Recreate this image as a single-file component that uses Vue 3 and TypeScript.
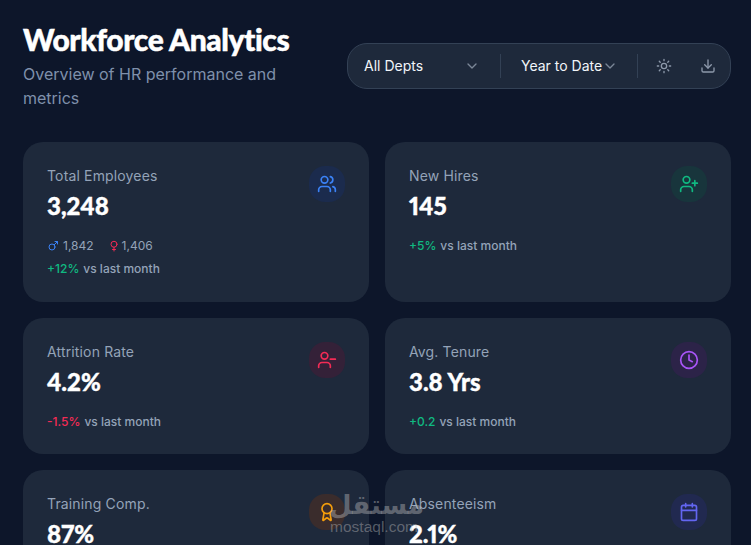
<script setup lang="ts">
interface Card {
  label: string;
  value: string;
  trend: string;
  trendClass: string;
  tone: string;
  icon: string;
  gender?: boolean;
}
const cards: Card[] = [
  { label: 'Total Employees', value: '3,248', trend: '+12%', trendClass: 'up', tone: 'blue', icon: 'users', gender: true },
  { label: 'New Hires', value: '145', trend: '+5%', trendClass: 'up', tone: 'green', icon: 'plus' },
  { label: 'Attrition Rate', value: '4.2%', trend: '-1.5%', trendClass: 'down', tone: 'red', icon: 'minus' },
  { label: 'Avg. Tenure', value: '3.8 Yrs', trend: '+0.2', trendClass: 'up', tone: 'purple', icon: 'clock' },
  { label: 'Training Comp.', value: '87%', trend: '+3%', trendClass: 'up', tone: 'amber', icon: 'award' },
  { label: 'Absenteeism', value: '2.1%', trend: '-0.4%', trendClass: 'up', tone: 'indigo', icon: 'calendar' },
];
</script>

<template>
  <div class="page">
    <header class="header">
      <div class="heading">
        <h1 class="title">Workforce Analytics</h1>
        <p class="subtitle">Overview of HR performance and metrics</p>
      </div>
      <div class="toolbar">
        <div class="select first">
          <span>All Depts</span>
          <svg class="chev" viewBox="0 0 24 24"><path d="m6 9 6 6 6-6" /></svg>
        </div>
        <i class="rule"></i>
        <div class="select second">
          <span>Year to Date</span>
          <svg class="chev" viewBox="0 0 24 24"><path d="m6 9 6 6 6-6" /></svg>
        </div>
        <i class="rule"></i>
        <svg class="tool sun" viewBox="0 0 24 24">
          <circle cx="12" cy="12" r="4" />
          <path d="M12 2v2M12 20v2M4.93 4.93l1.41 1.41M17.66 17.66l1.41 1.41M2 12h2M20 12h2M6.34 17.66l-1.41 1.41M19.07 4.93l-1.41 1.41" />
        </svg>
        <svg class="tool down-icon" viewBox="0 0 24 24">
          <path d="M21 15v4a2 2 0 0 1-2 2H5a2 2 0 0 1-2-2v-4" />
          <path d="m7 10 5 5 5-5" />
          <path d="M12 15V3" />
        </svg>
      </div>
    </header>

    <main class="grid">
      <section v-for="card in cards" :key="card.label" class="card">
        <div class="body">
          <div class="label">{{ card.label }}</div>
          <div class="value">{{ card.value }}</div>
          <div v-if="card.gender" class="gender">
            <span class="g">
              <svg class="gi male" viewBox="0 0 24 24"><circle cx="10" cy="14" r="6" /><path d="M14.5 9.5 21 3M16 3h5v5" /></svg>
              1,842
            </span>
            <span class="g g-f">
              <svg class="gi female" viewBox="0 0 24 24"><circle cx="12" cy="8.5" r="6" /><path d="M12 14.5V22M9 19h6" /></svg>
              1,406
            </span>
          </div>
          <div class="trend" :class="{ tight: card.gender }">
            <span :class="card.trendClass">{{ card.trend }}</span>
            <span class="vs">vs last month</span>
          </div>
        </div>
        <div class="badge" :class="card.tone">
          <svg viewBox="0 0 24 24">
            <template v-if="card.icon === 'users'">
              <path d="M16 21v-2a4 4 0 0 0-4-4H6a4 4 0 0 0-4 4v2" />
              <circle cx="9" cy="7" r="4" />
              <path d="M22 21v-2a4 4 0 0 0-3-3.87" />
              <path d="M16 3.13a4 4 0 0 1 0 7.75" />
            </template>
            <template v-else-if="card.icon === 'plus'">
              <path d="M16 21v-2a4 4 0 0 0-4-4H6a4 4 0 0 0-4 4v2" />
              <circle cx="9" cy="7" r="4" />
              <path d="M19 8v6M22 11h-6" />
            </template>
            <template v-else-if="card.icon === 'minus'">
              <path d="M16 21v-2a4 4 0 0 0-4-4H6a4 4 0 0 0-4 4v2" />
              <circle cx="9" cy="7" r="4" />
              <path d="M22 11h-6" />
            </template>
            <template v-else-if="card.icon === 'clock'">
              <circle cx="12" cy="12" r="10" />
              <path d="M12 6v6l4 2" />
            </template>
            <template v-else-if="card.icon === 'award'">
              <circle cx="12" cy="8" r="6" />
              <path d="m15.48 12.89 1.51 8.53a.5.5 0 0 1-.81.47l-3.58-2.69a1 1 0 0 0-1.2 0l-3.59 2.69a.5.5 0 0 1-.81-.47l1.51-8.53" />
            </template>
            <template v-else>
              <path d="M8 2v4M16 2v4" />
              <rect x="3" y="4" width="18" height="18" rx="2" />
              <path d="M3 10h18" />
            </template>
          </svg>
        </div>
      </section>
    </main>

    <div class="watermark" aria-hidden="true">
      <div class="wm-ar">مستقل</div>
      <div class="wm-en">mostaql.com</div>
    </div>
  </div>
</template>

<style>
html, body { margin: 0; background: #0d162a; }
</style>

<style scoped>
.page {
  position: relative;
  box-sizing: border-box;
  height: 545px;
  overflow: hidden;
  padding: 24px 20px 0 23px;
  background: #0d162a;
  font-family: Inter, "Liberation Sans", sans-serif;
}
.header {
  display: flex;
  justify-content: space-between;
  align-items: flex-start;
  height: 86px;
  margin-bottom: 32px;
}
.heading { width: 270px; }
.title {
  margin: 0;
  font-family: Lato, Inter, sans-serif;
  font-size: 30px;
  line-height: 30px;
  font-weight: 900;
  letter-spacing: -0.4px;
  -webkit-text-stroke: 0.5px #fff;
  white-space: nowrap;
  color: #fff;
}
.subtitle {
  margin: 8px 0 0;
  font-size: 16px;
  line-height: 24px;
  color: #7f90ab;
}
.toolbar {
  box-sizing: border-box;
  display: flex;
  align-items: center;
  width: 384px;
  height: 46px;
  margin-top: 19px;
  padding: 0 14px 0 16px;
  border: 1px solid #334155;
  border-radius: 20px;
  background: #1e293b;
}
.select {
  display: flex;
  align-items: center;
  justify-content: space-between;
  font-size: 14px;
  white-space: nowrap;
  color: #f1f5f9;
}
.select span { margin-bottom: 2px; }
.first { width: 116px; margin-right: 20px; }
.second { width: 96px; margin: 0 20px; }
.chev {
  flex: none;
  width: 16px;
  height: 16px;
  fill: none;
  stroke: #7b8797;
  stroke-width: 2;
  stroke-linecap: round;
  stroke-linejoin: round;
}
.rule {
  flex: none;
  width: 1px;
  height: 24px;
  background: #334155;
}
.tool {
  flex: none;
  width: 16px;
  height: 16px;
  fill: none;
  stroke: #8d99ab;
  stroke-width: 2;
  stroke-linecap: round;
  stroke-linejoin: round;
}
.sun { margin-left: 18px; }
.down-icon { margin-left: 28px; }
.grid {
  display: grid;
  grid-template-columns: 1fr 1fr;
  gap: 16px;
}
.card {
  display: flex;
  justify-content: space-between;
  align-items: flex-start;
  padding: 24px;
  border-radius: 20px;
  background: #1e293b;
}
.label {
  font-size: 14px;
  line-height: 20px;
  font-weight: 400;
  letter-spacing: 0.15px;
  color: #94a3b8;
}
.value {
  margin-top: 4px;
  font-family: Lato, Inter, sans-serif;
  font-size: 24px;
  line-height: 32px;
  font-weight: 900;
  font-variant-numeric: proportional-nums;
  -webkit-text-stroke: 0.4px #fff;
  color: #fff;
}
.gender {
  display: flex;
  gap: 14px;
  margin-top: 14px;
  font-size: 12px;
  line-height: 20px;
  color: #94a3b8;
}
.g { display: flex; align-items: center; gap: 4px; }
.g-f { gap: 2px; }
.gi {
  width: 12px;
  height: 12px;
  fill: none;
  stroke-width: 2;
  stroke-linecap: round;
  stroke-linejoin: round;
}
.male { stroke: #3b82f6; }
.female { stroke: #f32b55; }
.trend {
  display: flex;
  gap: 4px;
  margin-top: 16px;
  font-size: 12px;
  line-height: 16px;
  font-weight: 500;
}
.trend.tight { margin-top: 5px; margin-bottom: 1px; }
.up { color: #10b981; }
.down { color: #f32b55; }
.vs { color: #94a3b8; }
.badge {
  display: flex;
  align-items: center;
  justify-content: center;
  flex: none;
  width: 36px;
  height: 36px;
  border-radius: 16px;
}
.badge svg {
  width: 20px;
  height: 20px;
  fill: none;
  stroke: currentColor;
  stroke-width: 2;
  stroke-linecap: round;
  stroke-linejoin: round;
}
.blue { color: #3b82f6; background: #1b2b4d; }
.green { color: #10b981; background: #18353c; }
.red { color: #f32b55; background: #342138; }
.purple { color: #a855f7; background: #2c2348; }
.amber { color: #f59e0b; background: #3a2c2c; }
.indigo { color: #6366f1; background: #212950; }
.watermark {
  position: absolute;
  left: 329px;
  top: 488px;
  width: 90px;
  text-align: center;
  color: rgba(190, 190, 190, 0.42);
  pointer-events: none;
}
.wm-ar {
  font-family: "DejaVu Sans", sans-serif;
  font-size: 26px;
  line-height: 34px;
  font-weight: 700;
}
.wm-en {
  font-family: "Liberation Sans", sans-serif;
  font-size: 15.5px;
  line-height: 14px;
  margin-top: -2px;
  white-space: nowrap;
}
</style>
